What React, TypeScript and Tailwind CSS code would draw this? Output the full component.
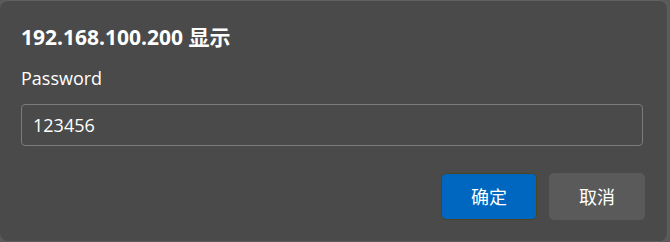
import React from 'react';

const font = { fontFamily: '"Segoe UI", "Open Sans", "Noto Sans CJK SC", sans-serif' };

export default function App() {
  return (
    <div className="w-[670px] h-[242px] bg-[#5a5a5a] overflow-hidden" style={font}>
      <div className="w-[668px] h-[241px] bg-[#4a4a4a] rounded-lg border border-[#616161] border-l-0 border-b-0 pl-[21px] pr-[22px] pt-[22px]">
        <h1 className="text-[21px] font-bold text-white leading-[29px]">
          192.168.100.200 显示
        </h1>
        <label className="block mt-[13px] text-[18px] text-white leading-[26px]">Password</label>
        <div className="mt-[13px] h-[42px] w-[622px] border border-[#7b7b7b] rounded-[4px] flex items-center px-[11px] text-[18px] text-white">
          123456
        </div>
        <div className="flex justify-end gap-3 mt-[27px]">
          <button className="w-[96px] h-[47px] rounded-[5px] bg-[#0067c0] border border-[#4d4420] text-white text-[18px] leading-none">
            确定
          </button>
          <button className="w-[96px] h-[47px] rounded-[5px] bg-[#5a5a5a] text-white text-[18px] leading-none">
            取消
          </button>
        </div>
      </div>
    </div>
  );
}
